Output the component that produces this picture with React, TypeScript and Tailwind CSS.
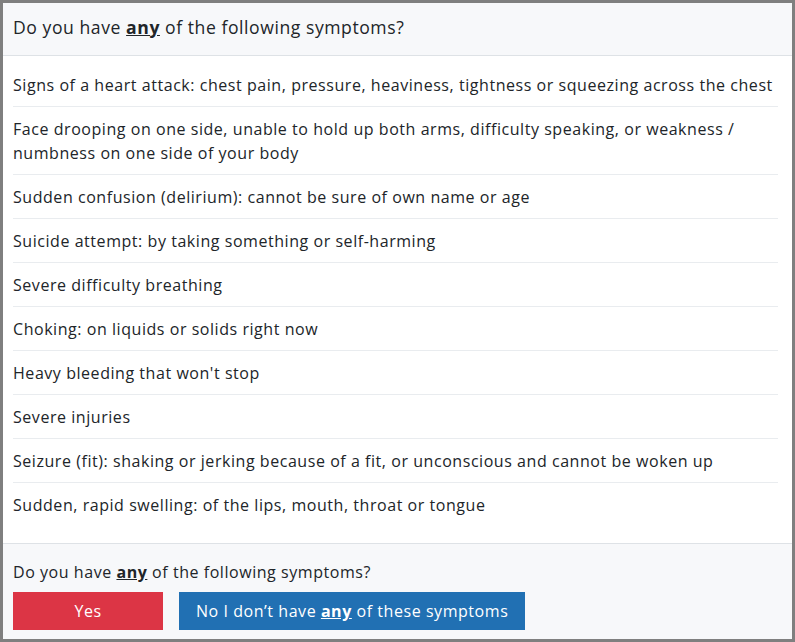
import React from 'react';

const SYMPTOMS: string[] = [
  'Signs of a heart attack: chest pain, pressure, heaviness, tightness or squeezing across the chest',
  'Face drooping on one side, unable to hold up both arms, difficulty speaking, or weakness / numbness on one side of your body',
  'Sudden confusion (delirium): cannot be sure of own name or age',
  'Suicide attempt: by taking something or self-harming',
  'Severe difficulty breathing',
  'Choking: on liquids or solids right now',
  "Heavy bleeding that won't stop",
  'Severe injuries',
  'Seizure (fit): shaking or jerking because of a fit, or unconscious and cannot be woken up',
  'Sudden, rapid swelling: of the lips, mouth, throat or tongue',
];

const Any: React.FC = () => <strong className="font-bold underline">any</strong>;

const App: React.FC = () => {
  return (
    <div
      className="w-[795px] h-[642px] border-[3px] border-[#7f7f7f] bg-white text-[#212529] flex flex-col tracking-[0.55px]"
      style={{ fontFamily: '"Open Sans", "Liberation Sans", sans-serif' }}
    >
      <div className="h-[53px] shrink-0 bg-[#f7f8fa] border-b border-[#dee2e6] px-[10px] pb-[5px] flex items-center">
        <div className="text-[17.6px] leading-[26px]">
          Do you have <Any /> of the following symptoms?
        </div>
      </div>

      <ul className="flex-1 pl-[10px] pr-[14px] pt-[7px] text-[16px] leading-[24px]">
        {SYMPTOMS.map((s, i) => (
          <li
            key={i}
            className={`pt-[10px] pb-[9px] ${i < SYMPTOMS.length - 1 ? 'border-b border-[#e9ecef]' : ''}`}
          >
            {s}
          </li>
        ))}
      </ul>

      <div className="shrink-0 bg-[#f7f8fa] border-t border-[#dee2e6] px-[10px] pt-[16px] pb-[9px]">
        <div className="text-[16px] leading-[24px]">
          Do you have <Any /> of the following symptoms?
        </div>
        <div className="mt-[8px] flex gap-[16px]">
          <button className="w-[150px] h-[38px] bg-[#dc3545] text-white text-[16px]">Yes</button>
          <button className="h-[38px] px-[17px] bg-[#2170b3] text-white text-[16px]">
            No I don’t have <Any /> of these symptoms
          </button>
        </div>
      </div>
    </div>
  );
};

export default App;
